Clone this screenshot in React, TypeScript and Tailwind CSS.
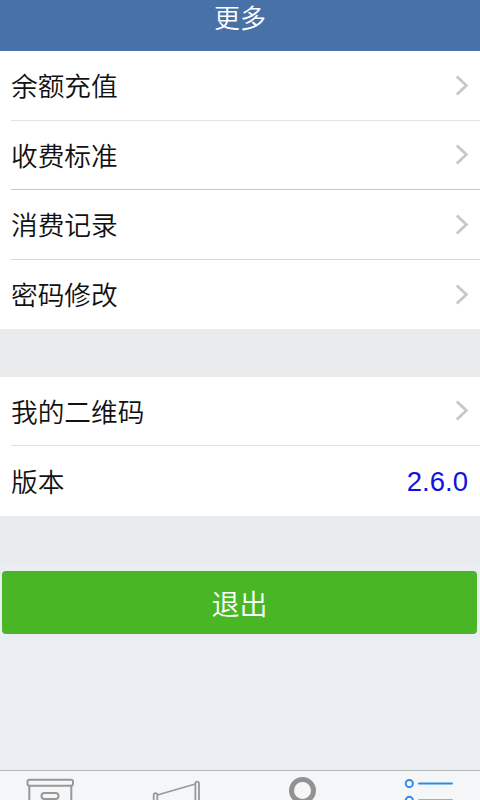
interface RowItem {
  label: string;
  value?: string;
  height: string;
  divider?: string;
}

const accountRows: RowItem[] = [
  { label: "余额充值", height: "h-[70px]", divider: "border-[#e2e2e2]" },
  { label: "收费标准", height: "h-[69px]", divider: "border-[#c6c7c9]" },
  { label: "消费记录", height: "h-[70px]", divider: "border-[#d9d9da]" },
  { label: "密码修改", height: "h-[69px]" },
];

const appRows: RowItem[] = [
  { label: "我的二维码", height: "h-[69px]", divider: "border-[#e0e0e1]" },
  { label: "版本", height: "h-[70px]", value: "2.6.0" },
];

function Chevron() {
  return (
    <svg width="14" height="22" viewBox="0 0 14 22" fill="none" stroke="#c7c7cc" strokeWidth="2.8">
      <path d="M1.8 1.5 11.4 10.5 1.8 19.5" />
    </svg>
  );
}

function RowGroup({ rows }: { rows: RowItem[] }) {
  return (
    <section className="bg-white pl-[11px]">
      {rows.map((row) => (
        <div
          key={row.label}
          className={`flex items-center justify-between pr-[11px] ${row.height} ${row.divider ? `border-b ${row.divider}` : ""}`}
        >
          <span className="pt-1 text-[26.7px] leading-none text-[#111]">{row.label}</span>
          {row.value ? (
            <span className="pr-px pt-0.5 text-[27.5px] leading-none font-normal text-[#1212e0]">{row.value}</span>
          ) : (
            <Chevron />
          )}
        </div>
      ))}
    </section>
  );
}

function TabBar() {
  return (
    <nav className="grid h-[30px] shrink-0 grid-cols-[100px_152px_100px_128px] overflow-hidden border-t border-[#b4b7ba] bg-[#f5f6f8]">
      <svg width="100" height="29" viewBox="0 0 100 29" fill="none" stroke="#989898" strokeWidth="2">
        <rect x="27.5" y="8.8" width="45.5" height="6" rx="2" />
        <path d="M29.3 15v15M71.3 15v15" />
        <rect x="41.5" y="22" width="17" height="6" rx="3" />
      </svg>
      <svg width="152" height="29" viewBox="0 0 152 29" fill="none" stroke="#989898" strokeWidth="1.8">
        <path d="M53.7 35V24a1.8 1.8 0 0 1 3.6 0v11" />
        <path d="M95.4 35V12.5a1.8 1.8 0 0 1 3.6 0V35" />
        <path d="M57.3 24 95.4 13" />
      </svg>
      <svg width="100" height="29" viewBox="0 0 100 29" fill="none" stroke="#929292" strokeWidth="5">
        <circle cx="50.5" cy="19.5" r="11" />
      </svg>
      <svg width="128" height="29" viewBox="0 0 128 29" fill="none" stroke="#2f8ce2" strokeWidth="2">
        <circle cx="57.3" cy="12.6" r="3.6" />
        <path d="M67 12.6h33" strokeLinecap="round" />
        <circle cx="57.3" cy="29.4" r="3.6" />
        <path d="M67 29h33" stroke="#7db9ee" strokeLinecap="round" />
      </svg>
    </nav>
  );
}

export default function App() {
  return (
    <main className="flex h-[800px] w-[480px] flex-col overflow-hidden bg-[#eaeef3] font-['Liberation_Sans','Noto_Sans_CJK_SC',sans-serif] font-[350]">
      <header className="flex h-[51px] shrink-0 justify-center bg-[#4871a7] pt-1.5">
        <h1 className="text-[26px] leading-[27px] font-[350] text-white">更多</h1>
      </header>

      <div className="bg-[#e9ebed]">
        <RowGroup rows={accountRows} />
        <div className="h-12" />
        <RowGroup rows={appRows} />
        <div className="h-[47px]" />
      </div>

      <div className="flex-1 pl-0.5 pr-[3px] pt-2">
        <button
          type="button"
          className="flex h-[63px] w-full items-center justify-center rounded-[4px] bg-[#49b725] pt-1.5 text-[28px] leading-none text-white"
        >
          退出
        </button>
      </div>

      <TabBar />
    </main>
  );
}
